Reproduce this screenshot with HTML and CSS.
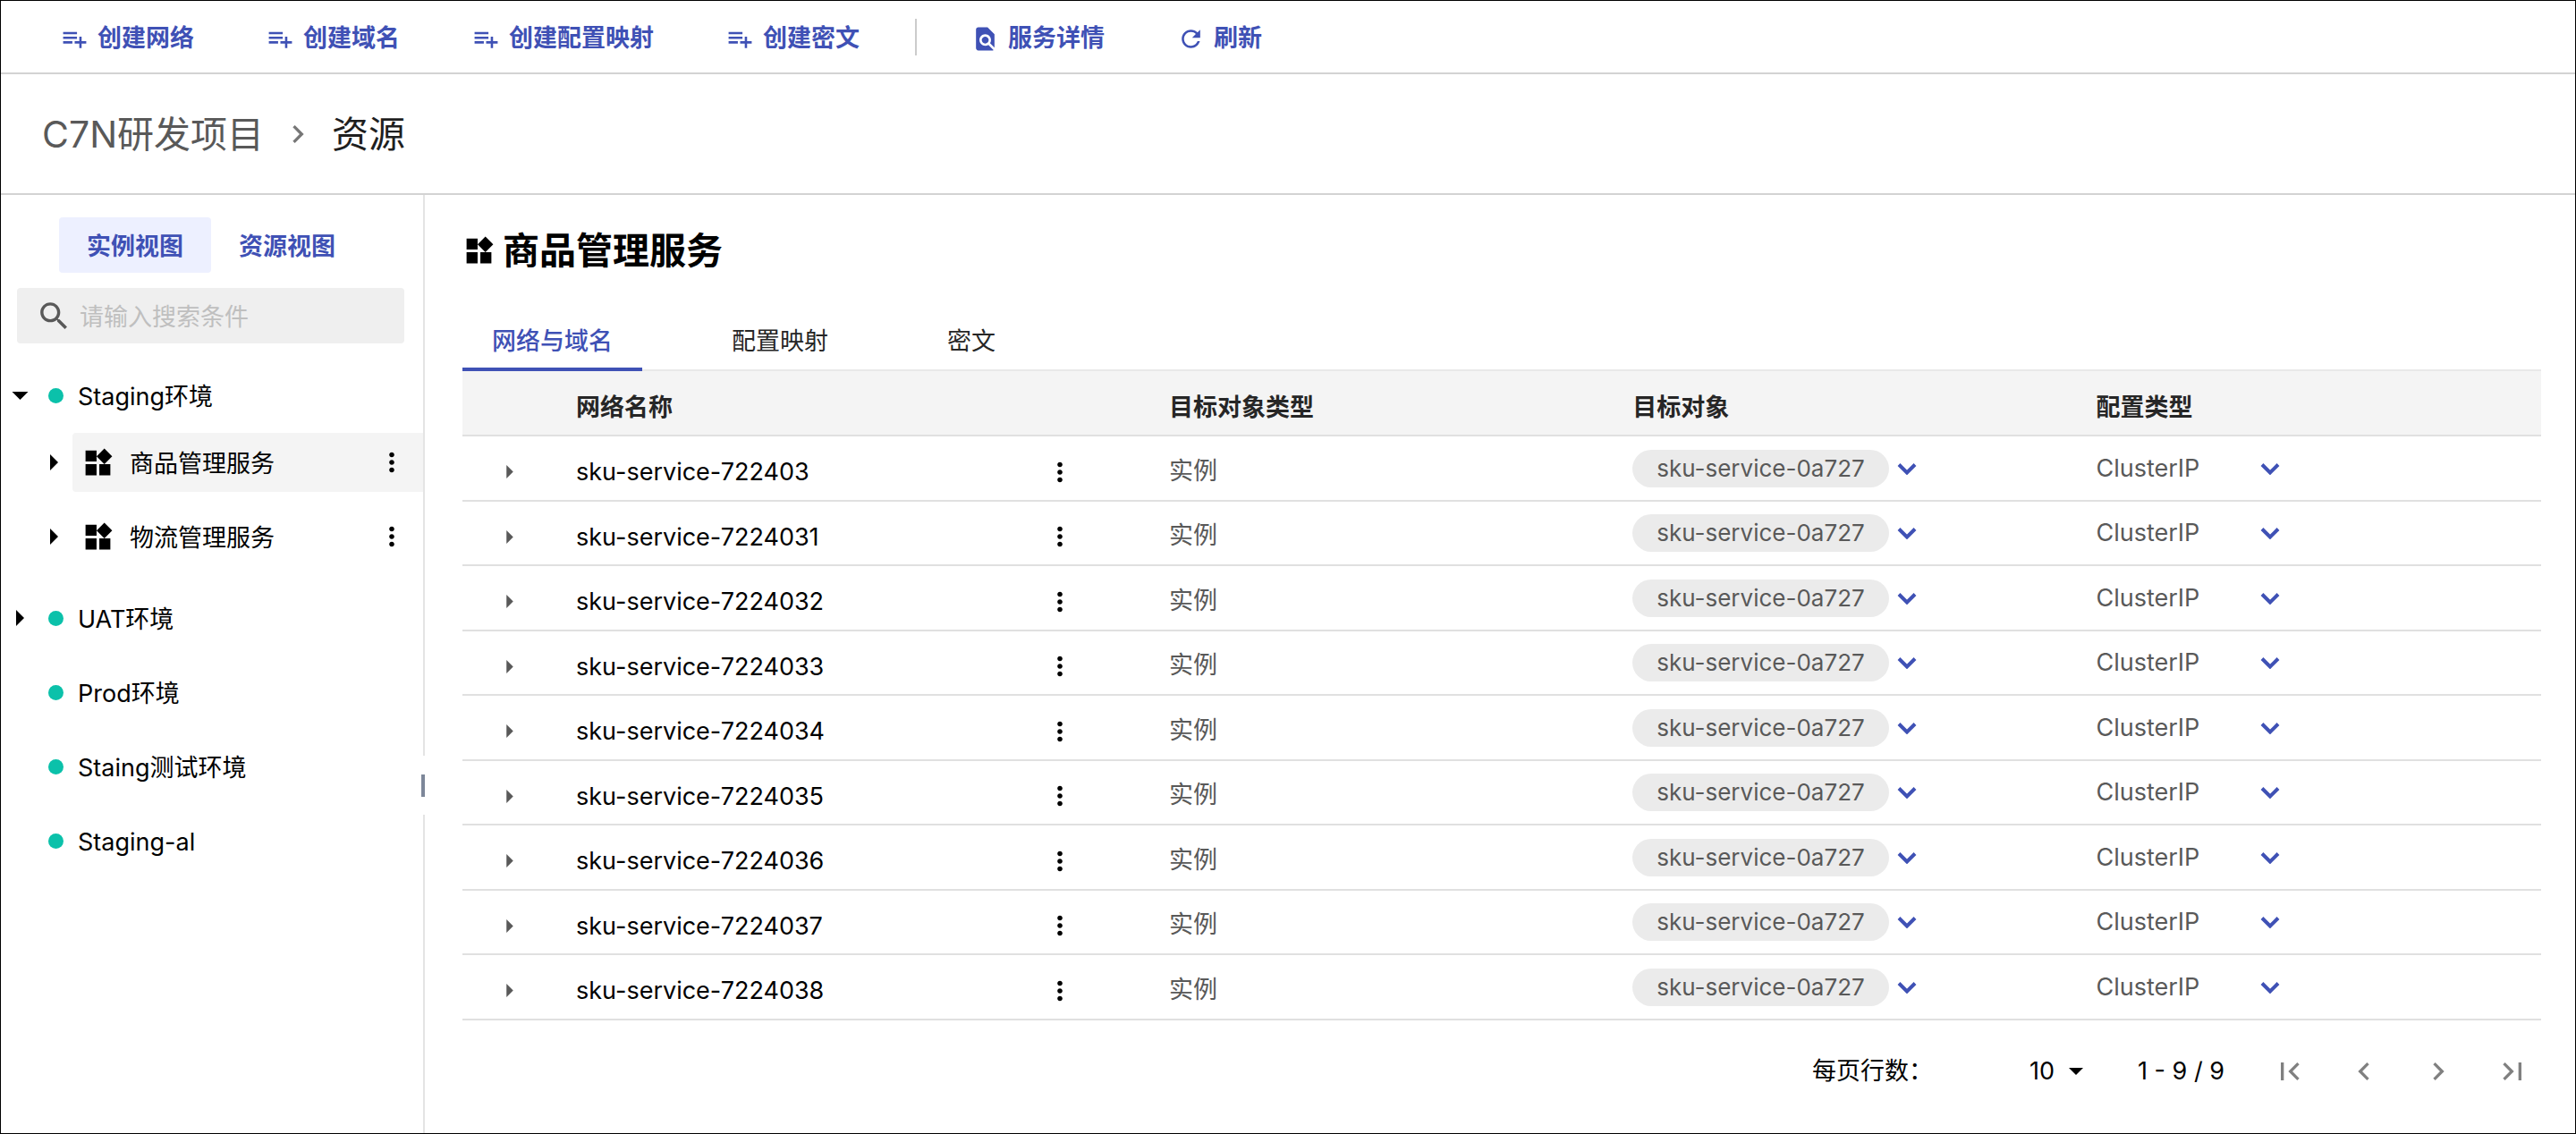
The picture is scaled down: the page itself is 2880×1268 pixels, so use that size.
FILE: index.html
```html
<!DOCTYPE html>
<html lang="zh-CN">
<head>
<meta charset="utf-8">
<meta name="viewport" content="width=device-width, initial-scale=1">
<title>资源 - C7N研发项目</title>
<link rel="stylesheet" href="styles.css">
</head>
<body>
<svg class="sprite" aria-hidden="true">
  <symbol id="i-add" viewBox="0 0 24 24"><path d="M14 10H2v2h12v-2zm0-4H2v2h12V6zm4 8v-4h-2v4h-4v2h4v4h2v-4h4v-2h-4zM2 16h8v-2H2v2z"/></symbol>
  <symbol id="i-find" viewBox="0 0 24 24"><path d="M20 19.59V8l-6-6H6c-1.1 0-1.99.9-1.99 2L4 20c0 1.1.89 2 1.99 2H18c.45 0 .85-.15 1.19-.4l-4.43-4.43c-.8.52-1.74.83-2.76.83-2.76 0-5-2.24-5-5s2.24-5 5-5 5 2.240 5 5c0 1.020-.31 1.960-.83 2.750L20 19.590zM9 13c0 1.660 1.340 3 3 3s3-1.340 3-3-1.340-3-3-3-3 1.340-3 3z"/></symbol>
  <symbol id="i-refresh" viewBox="0 0 24 24"><path d="M17.65 6.35C16.200 4.900 14.210 4 12 4c-4.420 0-7.990 3.580-7.990 8s3.570 8 7.990 8c3.730 0 6.840-2.550 7.730-6h-2.080c-.82 2.330-3.040 4-5.650 4-3.310 0-6-2.690-6-6s2.690-6 6-6c1.660 0 3.140.69 4.220 1.780L13 11h7V4l-2.350 2.350z"/></symbol>
  <symbol id="i-search" viewBox="0 0 24 24"><path d="M15.500 14h-.79l-.28-.27C15.410 12.590 16 11.110 16 9.500 16 5.910 13.090 3 9.500 3S3 5.910 3 9.500 5.910 16 9.500 16c1.610 0 3.090-.59 4.230-1.570l.27.28v.79l5 4.990L20.490 19l-4.990-5zm-6 0C7.010 14 5 11.990 5 9.500S7.010 5 9.500 5 14 7.010 14 9.500 11.990 14 9.500 14z"/></symbol>
  <symbol id="i-widgets" viewBox="0 0 24 24"><path d="M13 13v8h8v-8h-8zM3 21h8v-8H3v8zM3 3v8h8V3H3zm13.660-1.310L11 7.340 16.660 13l5.660-5.660-5.660-5.650z"/></symbol>
  <symbol id="i-more" viewBox="0 0 24 24"><path d="M12 8c1.100 0 2-.9 2-2s-.9-2-2-2-2 .9-2 2 .9 2 2 2zm0 2c-1.100 0-2 .9-2 2s.9 2 2 2 2-.9 2-2-.9-2-2-2zm0 6c-1.100 0-2 .9-2 2s.9 2 2 2 2-.9 2-2-.9-2-2-2z"/></symbol>
  <symbol id="i-right" viewBox="0 0 10 20"><path d="M0 0l10 10L0 20z"/></symbol>
  <symbol id="i-down" viewBox="0 0 20 10"><path d="M0 0h20L10 10z"/></symbol>
  <symbol id="i-expand" viewBox="0 0 22 14"><path d="M2 2.500l9 9 9-9" fill="none" stroke="currentColor" stroke-width="4"/></symbol>
  <symbol id="i-next" viewBox="0 0 24 24"><path d="M10 6L8.590 7.410 13.170 12l-4.580 4.590L10 18l6-6z"/></symbol>
  <symbol id="i-prev" viewBox="0 0 24 24"><path d="M15.410 7.410L14 6l-6 6 6 6 1.410-1.410L10.830 12z"/></symbol>
  <symbol id="i-first" viewBox="0 0 24 24"><path d="M18.410 16.590L13.820 12l4.590-4.590L17 6l-6 6 6 6zM6 6h2v12H6z"/></symbol>
  <symbol id="i-last" viewBox="0 0 24 24"><path d="M5.590 7.410L10.180 12l-4.590 4.590L7 18l6-6-6-6zM16 6h2v12h-2z"/></symbol>
</svg>

<div class="app">
  <header class="toolbar">
    <button class="tool"><svg><use href="#i-add"/></svg>创建网络</button>
    <button class="tool"><svg><use href="#i-add"/></svg>创建域名</button>
    <button class="tool"><svg><use href="#i-add"/></svg>创建配置映射</button>
    <button class="tool"><svg><use href="#i-add"/></svg>创建密文</button>
    <span class="divider"></span>
    <button class="tool"><svg><use href="#i-find"/></svg>服务详情</button>
    <button class="tool"><svg><use href="#i-refresh"/></svg>刷新</button>
  </header>

  <nav class="crumbs" aria-label="面包屑">
    <a href="#project">C7N研发项目</a>
    <svg><use href="#i-next"/></svg>
    <span class="current">资源</span>
  </nav>

  <div class="body">
    <aside class="side">
      <div class="views">
        <button class="view active">实例视图</button>
        <button class="view">资源视图</button>
      </div>
      <label class="search">
        <svg><use href="#i-search"/></svg>
        <input type="text" placeholder="请输入搜索条件" aria-label="搜索">
      </label>
      <ul class="tree">
        <li>
          <div class="node"><button class="toggle" aria-label="收起"><svg class="down"><use href="#i-down"/></svg></button><i class="dot"></i><span class="label">Staging环境</span></div>
          <ul class="subtree">
            <li class="leaf"><button class="toggle" aria-label="展开"><svg class="right"><use href="#i-right"/></svg></button>
              <div class="service selected"><svg class="widgets"><use href="#i-widgets"/></svg><span class="label">商品管理服务</span><button class="more" aria-label="更多"><svg><use href="#i-more"/></svg></button></div></li>
            <li class="leaf"><button class="toggle" aria-label="展开"><svg class="right"><use href="#i-right"/></svg></button>
              <div class="service"><svg class="widgets"><use href="#i-widgets"/></svg><span class="label">物流管理服务</span><button class="more" aria-label="更多"><svg><use href="#i-more"/></svg></button></div></li>
          </ul>
        </li>
        <li><div class="node"><button class="toggle" aria-label="展开"><svg class="right"><use href="#i-right"/></svg></button><i class="dot"></i><span class="label">UAT环境</span></div></li>
        <li><div class="node"><span class="toggle"></span><i class="dot"></i><span class="label">Prod环境</span></div></li>
        <li><div class="node"><span class="toggle"></span><i class="dot"></i><span class="label">Staing测试环境</span></div></li>
        <li><div class="node"><span class="toggle"></span><i class="dot"></i><span class="label">Staging-al</span></div></li>
      </ul>
      <div class="resizer"></div>
    </aside>

    <main class="main">
      <h1 class="title"><svg class="widgets"><use href="#i-widgets"/></svg>商品管理服务</h1>
      <div class="tabs" role="tablist">
        <button class="tab active" role="tab" aria-selected="true">网络与域名</button>
        <button class="tab" role="tab">配置映射</button>
        <button class="tab" role="tab">密文</button>
      </div>
      <table class="grid">
        <colgroup><col class="c-expand"><col class="c-name"><col class="c-more"><col class="c-type"><col class="c-target"><col class="c-config"></colgroup>
        <thead>
          <tr><th></th><th>网络名称</th><th></th><th>目标对象类型</th><th>目标对象</th><th>配置类型</th></tr>
        </thead>
        <tbody>
          <tr><td class="expand"><button aria-label="展开"><svg><use href="#i-right"/></svg></button></td><td class="name">sku-service-722403</td><td><button class="more" aria-label="更多"><svg><use href="#i-more"/></svg></button></td><td class="type">实例</td><td><div class="target"><span class="chip">sku-service-0a727</span><button class="chev" aria-label="展开"><svg><use href="#i-expand"/></svg></button></div></td><td><div class="config"><span>ClusterIP</span><button class="chev" aria-label="展开"><svg><use href="#i-expand"/></svg></button></div></td></tr>
          <tr><td class="expand"><button aria-label="展开"><svg><use href="#i-right"/></svg></button></td><td class="name">sku-service-7224031</td><td><button class="more" aria-label="更多"><svg><use href="#i-more"/></svg></button></td><td class="type">实例</td><td><div class="target"><span class="chip">sku-service-0a727</span><button class="chev" aria-label="展开"><svg><use href="#i-expand"/></svg></button></div></td><td><div class="config"><span>ClusterIP</span><button class="chev" aria-label="展开"><svg><use href="#i-expand"/></svg></button></div></td></tr>
          <tr><td class="expand"><button aria-label="展开"><svg><use href="#i-right"/></svg></button></td><td class="name">sku-service-7224032</td><td><button class="more" aria-label="更多"><svg><use href="#i-more"/></svg></button></td><td class="type">实例</td><td><div class="target"><span class="chip">sku-service-0a727</span><button class="chev" aria-label="展开"><svg><use href="#i-expand"/></svg></button></div></td><td><div class="config"><span>ClusterIP</span><button class="chev" aria-label="展开"><svg><use href="#i-expand"/></svg></button></div></td></tr>
          <tr><td class="expand"><button aria-label="展开"><svg><use href="#i-right"/></svg></button></td><td class="name">sku-service-7224033</td><td><button class="more" aria-label="更多"><svg><use href="#i-more"/></svg></button></td><td class="type">实例</td><td><div class="target"><span class="chip">sku-service-0a727</span><button class="chev" aria-label="展开"><svg><use href="#i-expand"/></svg></button></div></td><td><div class="config"><span>ClusterIP</span><button class="chev" aria-label="展开"><svg><use href="#i-expand"/></svg></button></div></td></tr>
          <tr><td class="expand"><button aria-label="展开"><svg><use href="#i-right"/></svg></button></td><td class="name">sku-service-7224034</td><td><button class="more" aria-label="更多"><svg><use href="#i-more"/></svg></button></td><td class="type">实例</td><td><div class="target"><span class="chip">sku-service-0a727</span><button class="chev" aria-label="展开"><svg><use href="#i-expand"/></svg></button></div></td><td><div class="config"><span>ClusterIP</span><button class="chev" aria-label="展开"><svg><use href="#i-expand"/></svg></button></div></td></tr>
          <tr><td class="expand"><button aria-label="展开"><svg><use href="#i-right"/></svg></button></td><td class="name">sku-service-7224035</td><td><button class="more" aria-label="更多"><svg><use href="#i-more"/></svg></button></td><td class="type">实例</td><td><div class="target"><span class="chip">sku-service-0a727</span><button class="chev" aria-label="展开"><svg><use href="#i-expand"/></svg></button></div></td><td><div class="config"><span>ClusterIP</span><button class="chev" aria-label="展开"><svg><use href="#i-expand"/></svg></button></div></td></tr>
          <tr><td class="expand"><button aria-label="展开"><svg><use href="#i-right"/></svg></button></td><td class="name">sku-service-7224036</td><td><button class="more" aria-label="更多"><svg><use href="#i-more"/></svg></button></td><td class="type">实例</td><td><div class="target"><span class="chip">sku-service-0a727</span><button class="chev" aria-label="展开"><svg><use href="#i-expand"/></svg></button></div></td><td><div class="config"><span>ClusterIP</span><button class="chev" aria-label="展开"><svg><use href="#i-expand"/></svg></button></div></td></tr>
          <tr><td class="expand"><button aria-label="展开"><svg><use href="#i-right"/></svg></button></td><td class="name">sku-service-7224037</td><td><button class="more" aria-label="更多"><svg><use href="#i-more"/></svg></button></td><td class="type">实例</td><td><div class="target"><span class="chip">sku-service-0a727</span><button class="chev" aria-label="展开"><svg><use href="#i-expand"/></svg></button></div></td><td><div class="config"><span>ClusterIP</span><button class="chev" aria-label="展开"><svg><use href="#i-expand"/></svg></button></div></td></tr>
          <tr><td class="expand"><button aria-label="展开"><svg><use href="#i-right"/></svg></button></td><td class="name">sku-service-7224038</td><td><button class="more" aria-label="更多"><svg><use href="#i-more"/></svg></button></td><td class="type">实例</td><td><div class="target"><span class="chip">sku-service-0a727</span><button class="chev" aria-label="展开"><svg><use href="#i-expand"/></svg></button></div></td><td><div class="config"><span>ClusterIP</span><button class="chev" aria-label="展开"><svg><use href="#i-expand"/></svg></button></div></td></tr>
        </tbody>
      </table>
      <div class="pager">
        <label for="page-size">每页行数：</label>
        <div class="size"><select id="page-size"><option>10</option><option>20</option></select><svg><use href="#i-down"/></svg></div>
        <span class="range">1 - 9 / 9</span>
        <div class="pages">
          <button aria-label="首页"><svg><use href="#i-first"/></svg></button>
          <button aria-label="上一页"><svg><use href="#i-prev"/></svg></button>
          <button aria-label="下一页"><svg><use href="#i-next"/></svg></button>
          <button aria-label="末页"><svg><use href="#i-last"/></svg></button>
        </div>
      </div>
    </main>
  </div>
</div>
</body>
</html>
```

FILE: styles.css
```css
* { box-sizing: border-box; }

body {
  margin: 0;
  background: #fff;
  color: #000;
  font: 27px/40px Inter, "Noto Sans CJK SC", sans-serif;
}

button, input, select {
  margin: 0;
  padding: 0;
  border: 0;
  background: none;
  color: inherit;
  font: inherit;
}

button { cursor: pointer; }
svg { display: block; flex: none; fill: currentColor; }
ul { margin: 0; padding: 0; list-style: none; }
.sprite { position: absolute; width: 0; height: 0; }

.app {
  display: flex;
  flex-direction: column;
  min-height: 100vh;
  border: 1px solid #000;
}

/* toolbar */
.toolbar {
  display: flex;
  align-items: center;
  height: 82px;
  padding-left: 27px;
  border-bottom: 2px solid #d3d3d3;
}
.tool {
  display: flex;
  align-items: center;
  gap: 10px;
  padding: 4px 41px 0 40px;
  color: #3f51b5;
  font-weight: 600;
}
.tool svg { width: 31px; height: 31px; }
.divider { width: 2px; height: 41px; margin: 0 21px; background: #ccc; }

/* breadcrumb */
.crumbs {
  display: flex;
  align-items: center;
  height: 135px;
  padding-left: 46px;
  border-bottom: 2px solid #d3d3d3;
  font-size: 41px;
  line-height: 60px;
}
.crumbs a { color: #595959; text-decoration: none; }
.crumbs svg { width: 40px; height: 40px; margin: 0 18px; color: #777; }
.crumbs .current { color: #1f1f1f; }

.body { display: flex; flex: 1; }

/* side tree */
.side {
  position: relative;
  flex: none;
  width: 474px;
  padding-top: 25px;
  border-right: 2px solid #e4e4e4;
}
.views { display: flex; padding-left: 65px; }
.view {
  height: 62px;
  padding: 4px 31px 0;
  border-radius: 4px;
  color: #3f51b5;
  font-weight: 600;
}
.view.active { background: #edf0ff; }
.search {
  display: flex;
  align-items: center;
  gap: 8px;
  height: 62px;
  margin: 17px 21px 25px 18px;
  padding-left: 21px;
  border-radius: 4px;
  background: #efefef;
}
.search svg { width: 41px; height: 41px; color: #595959; }
.search input { flex: 1; min-width: 0; padding-top: 4px; outline: 0; }
.search input::placeholder { color: #bfbfbf; opacity: 1; }

.tree > li { margin-bottom: 17px; }
.node, .leaf { display: flex; align-items: center; height: 66px; }
.label { padding-top: 4px; }
.toggle { display: flex; justify-content: center; flex: none; width: 42px; }
.toggle .down { width: 19px; height: 9px; }
.toggle .right { width: 9px; height: 18px; }
.dot {
  flex: none;
  width: 17px;
  height: 17px;
  margin: 0 16px 0 11px;
  border-radius: 50%;
  background: #0bc1aa;
}
.subtree { margin: 9px 0 25px; padding-left: 38px; }
.leaf + .leaf { margin-top: 17px; }
.service {
  display: flex;
  flex: 1;
  align-items: center;
  gap: 17px;
  height: 66px;
  padding: 0 18px 0 10px;
  border-radius: 4px 0 0 4px;
}
.service.selected { background: #f4f4f4; }
.widgets { width: 37px; height: 37px; }
.more svg { width: 34px; height: 34px; }
.service .more { margin-left: auto; }

/* the white block interrupts the pane border around the drag handle */
.resizer {
  position: absolute;
  top: 627px;
  right: -2px;
  display: flex;
  align-items: center;
  width: 4px;
  height: 66px;
  background: #fff;
}
.resizer::before { content: ""; width: 4px; height: 25px; background: #7d8799; }

/* main pane */
.main { flex: 1; min-width: 0; padding: 31px 38px 0 42px; }
.title {
  display: flex;
  align-items: center;
  gap: 8px;
  margin: 0;
  font-size: 41px;
  font-weight: 600;
  line-height: 62px;
}
.tabs {
  display: flex;
  gap: 67px;
  margin-top: 31px;
  border-bottom: 2px solid #e8e8e8;
}
.tab {
  height: 73px;
  margin-bottom: -2px;
  padding: 10px 33px 0;
  border-bottom: 4px solid transparent;
  color: #262626;
}
.tab.active { border-color: #3f51b5; color: #3f51b5; font-weight: 500; }

.grid { width: 100%; border-collapse: separate; border-spacing: 0; table-layout: fixed; }
.c-expand { width: 111px; }
.c-more { width: 139px; }
.c-type, .c-target { width: 22.3%; }
.c-config { width: 22.1%; }
.grid th, .grid td {
  height: 73px;
  padding: 0 16px;
  border-bottom: 2px solid #e0e0e0;
  text-align: left;
  vertical-align: middle;
}
.grid th { padding-top: 10px; background: #f4f4f4; color: #262626; font-weight: 600; }
.grid td { color: #595959; }
.grid tr:nth-child(even) td { height: 72px; }
.grid .type { padding-top: 6px; }
.grid .name { padding-top: 9px; color: #000; }
.grid .more { display: block; padding-top: 8px; color: #000; }
.grid .expand { padding: 8px 22px 0 16px; }
.expand button { display: block; margin: 0 auto; }
.expand svg { width: 8px; height: 15px; }
.target, .config { display: flex; align-items: center; }
.chip {
  padding: 0 27px;
  border-radius: 21px;
  background: #ebebeb;
  font-size: 26px;
  line-height: 42px;
}
.chev { color: #3f51b5; }
.chev svg { width: 22px; height: 14px; }
.target .chev { margin-left: 9px; }
.config span { width: 184px; }

/* pagination */
.pager {
  display: flex;
  align-items: center;
  justify-content: flex-end;
  padding: 37px 12px 37px 0;
}
.size { display: flex; align-items: center; margin: 0 61px 0 108px; }
.size select { appearance: none; width: 44px; outline: 0; }
.size svg { width: 16px; height: 8px; }
.pages { display: flex; gap: 43px; margin-left: 53px; color: #808080; }
.pages svg { width: 40px; height: 40px; }
```
